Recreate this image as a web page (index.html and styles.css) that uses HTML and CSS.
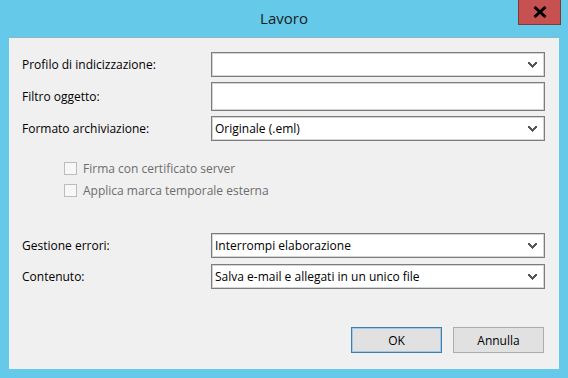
FILE: index.html
```html
<!DOCTYPE html>
<html lang="it">
<head>
    <meta charset="UTF-8">
    <meta name="viewport" content="width=device-width, initial-scale=1.0">
    <title>Lavoro</title>
    <link rel="stylesheet" href="styles.css">
</head>
<body>

    <div id="window">

        <div class="titlebar">
            <span class="title">Lavoro</span>
            <button class="close" title="Chiudi">
                <svg width="14" height="12" viewBox="0 0 14 12">
                    <path d="M1.5 1 L12.5 11 M12.5 1 L1.5 11" stroke="#000" stroke-width="3" fill="none"/>
                </svg>
            </button>
        </div>

        <div class="client">

            <div class="form-row first">
                <label>Profilo di indicizzazione:</label>
                <div class="combo"><span></span><i class="chevron"></i></div>
            </div>

            <div class="form-row">
                <label>Filtro oggetto:</label>
                <input type="text" class="textbox">
            </div>

            <div class="form-row">
                <label>Formato archiviazione:</label>
                <div class="combo"><span>Originale (.eml)</span><i class="chevron"></i></div>
            </div>

            <div class="checks">
                <label class="check"><span class="box"></span>Firma con certificato server</label>
                <label class="check"><span class="box"></span>Applica marca temporale esterna</label>
            </div>

            <div class="form-row spaced">
                <label>Gestione errori:</label>
                <div class="combo"><span>Interrompi elaborazione</span><i class="chevron"></i></div>
            </div>

            <div class="form-row tight">
                <label>Contenuto:</label>
                <div class="combo"><span>Salva e-mail e allegati in un unico file</span><i class="chevron"></i></div>
            </div>

            <div class="actions">
                <button class="btn default">OK</button>
                <button class="btn">Annulla</button>
            </div>

        </div>

    </div>

</body>
</html>
```

FILE: styles.css
```css
body {
    margin: 0;
    background-color: #65c9e9;
    font-family: 'Segoe UI', 'Open Sans', 'Liberation Sans', Arial, sans-serif;
    font-size: 12px;
    color: #000;
}

#window {
    width: 568px;
    height: 378px;
    display: flex;
    flex-direction: column;
}

.titlebar {
    position: relative;
    height: 37px;
    display: flex;
    justify-content: center;
    align-items: flex-start;
}

.title {
    margin-top: 8px;
    font-size: 15px;
    color: #1b1b1b;
}

.close {
    position: absolute;
    top: 0;
    right: 7px;
    width: 43px;
    height: 25px;
    padding: 0;
    border: 1px solid #7a3a36;
    border-top: none;
    background-color: #c75050;
    display: flex;
    align-items: center;
    justify-content: center;
}

.client {
    margin: 0 9px 8px 9px;
    height: 332px;
    background-color: #f0f0f0;
    border-top: 1px solid #8fb4c4;
    box-sizing: border-box;
    padding: 14px 14px 0 13px;
    display: flex;
    flex-direction: column;
}

.form-row {
    display: grid;
    grid-template-columns: 189px 334px;
    align-items: center;
    margin-top: 5px;
}

.form-row.first {
    margin-top: 0;
}

.form-row.spaced {
    margin-top: 33px;
}

.form-row.tight {
    margin-top: 6px;
}

.combo,
.textbox {
    box-sizing: border-box;
    height: 25px;
    background-color: #fff;
    border: 1px solid #7d7d7d;
    box-shadow: inset 0 0 0 1px #d4d4d4;
}

.combo {
    display: flex;
    align-items: center;
    justify-content: space-between;
    padding: 0 7px 0 3px;
}

.textbox {
    height: 29px;
    margin: 0;
    padding: 0 3px;
    font: inherit;
    outline: none;
}

.chevron {
    width: 9px;
    height: 6px;
    background:
        linear-gradient(45deg, transparent 40%, #555 40%, #555 70%, transparent 70%) left / 5px 6px no-repeat,
        linear-gradient(-45deg, transparent 40%, #555 40%, #555 70%, transparent 70%) right / 5px 6px no-repeat;
}

.checks {
    display: flex;
    flex-direction: column;
    gap: 2px;
    margin-top: 17px;
    padding-left: 42px;
}

.check {
    height: 20px;
    display: flex;
    align-items: center;
    gap: 6px;
    color: #6d6d6d;
}

.box {
    width: 13px;
    height: 13px;
    box-sizing: border-box;
    border: 1px solid #bcbcbc;
    background-color: #f7f7f7;
}

.actions {
    display: flex;
    justify-content: flex-end;
    gap: 11px;
    margin-top: 38px;
    padding-right: 1px;
}

.btn {
    width: 91px;
    height: 26px;
    font: inherit;
    color: #000;
    background-color: #e1e1e1;
    border: 1px solid #adadad;
    padding: 0;
}

.btn.default {
    border-color: #3c7fb1;
    box-shadow: inset 0 0 0 1px #a6c8e4;
}
```
